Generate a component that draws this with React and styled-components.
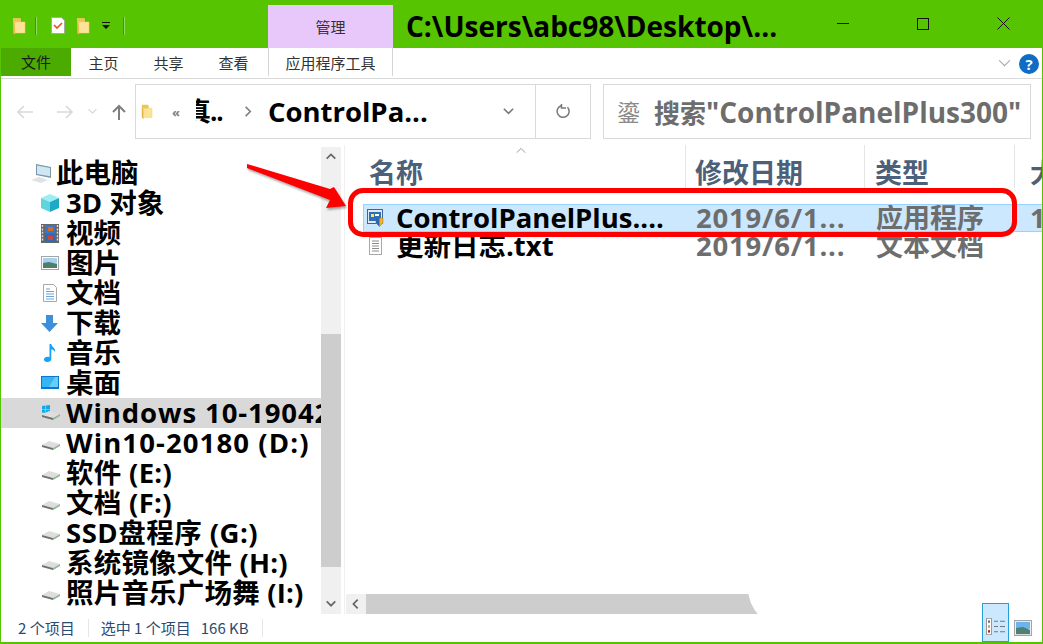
import React from 'react';
import styled, { createGlobalStyle } from 'styled-components';

const Global = createGlobalStyle`
  html, body { margin: 0; padding: 0; background: #fff; overflow: hidden; }
  * { box-sizing: border-box; }
`;
const SANS = `"Open Sans", "Noto Sans", "Noto Sans CJK SC", sans-serif`;
const UI = `"Noto Sans CJK SC", "Noto Sans", sans-serif`;

const Win = styled.div`
  position: relative; width: 1043px; height: 644px; background: #fff; overflow: hidden;
  display: flex; flex-direction: column; font-family: ${SANS};
  border-left: 1px solid #56c400; border-right: 1px solid #56c400; border-bottom: 2px solid #56c400;
`;
const TitleBar = styled.div`
  height: 48px; background: #56c400; display: flex; align-items: flex-start; flex: none; margin: 0 -1px;
`;
const Quick = styled.div`
  width: 268px; height: 48px; flex: none; display: flex; align-items: center; padding: 3px 0 0 12px;
`;
const QDivider = styled.span`
  width: 2px; height: 18px; background: #8fdc5f; border: 0 solid #3d9a00; border-width: 0 0 0 1px; flex: none;
  margin-left: ${p => p.$ml}px;
`;
const QIcon = styled.span`display: flex; margin-left: ${p => p.$ml || 0}px;`;
const ContextTab = styled.div`
  width: 125px; height: 43px; margin-top: 5px; background: #e8c8fa; color: #333;
  font: 400 15px ${UI}; display: flex; align-items: center; justify-content: center; flex: none;
`;
const Title = styled.div`
  margin-left: 13px; width: 380px; font: 700 28px/52px ${SANS}; color: #000; white-space: nowrap; flex: none;
`;
const WinCtrls = styled.div`
  display: flex; margin-left: auto; height: 48px; align-items: center;
`;
const WinBtn = styled.span`
  width: 80px; display: flex; justify-content: center; margin-top: -1px;
`;
const Ribbon = styled.div`
  height: 31px; flex: none; display: flex; align-items: flex-start; border-bottom: 1px solid #dadada; position: relative;
`;
const FileTab = styled.div`
  width: 70px; height: 28px; background: #4cab00; color: #1a1a1a; font: 400 15px/28px ${UI}; text-align: center; flex: none;
`;
const RTab = styled.div`
  width: 65px; height: 28px; font: 400 15px/30px ${UI}; color: #333; text-align: center; flex: none;
`;
const ToolTab = styled(RTab)`
  width: 125px; margin-left: 2px; border: 0 solid #d4d4d4; border-width: 0 1px;
`;
const RibbonRight = styled.div`
  margin-left: auto; display: flex; align-items: center; height: 28px; gap: 7px; padding: 3px 3px 0 0;
`;
const Help = styled.span`
  width: 20px; height: 20px; border-radius: 50%; background: #0f6cc4; color: #fff;
  font: 700 15px/20px ${SANS}; text-align: center;
`;
const AddressRow = styled.div`
  height: 66px; flex: none; padding: 5px 12px 6px 0; display: flex; align-items: stretch;
`;
const NavBtns = styled.div`
  width: 134px; flex: none; display: flex; align-items: center; padding-left: 16px;
`;
const NavIcon = styled.span`display: flex; margin-left: ${p => p.$ml || 0}px;`;
const AddrBox = styled.div`
  width: 456px; flex: none; border: 1px solid #d9d9d9; display: flex; align-items: center;
`;
const AddrFolder = styled.span`display: flex; margin: 0 0 0 5px;`;
const Crumbs = styled.span`
  font: 700 13px ${SANS}; color: #808080; margin-left: 19px; letter-spacing: -1px; width: 24px; flex: none;
`;
const ClippedCrumb = styled.span`
  width: 32px; flex: none; overflow: hidden; white-space: nowrap; font: 700 26px/1.3 ${SANS}; color: #000; margin-right: 13px;
`;
const ClippedInner = styled.span`display: inline-block; margin-left: -11px; letter-spacing: -1px;`;
const CrumbText = styled.span`
  font: 700 27.5px/1 ${SANS}; color: #000; white-space: nowrap; width: ${p => p.$w}px; flex: none; margin-left: 14px;
`;
const AddrCaret = styled.span`
  display: flex; margin-left: auto; width: 56px; height: 100%; align-items: center; padding-left: 23px;
`;
const Refresh = styled.span`
  width: 55px; height: 100%; border-left: 1px solid #d9d9d9; display: flex; align-items: center; justify-content: center;
`;
const SearchBox = styled.div`
  margin-left: 12px; width: 428px; flex: none; border: 1px solid #d9d9d9; display: flex; align-items: center;
  padding-left: 13px; color: #6d6d6d; white-space: nowrap; overflow: hidden;
`;
const SearchGlyph = styled.span`font: 400 23px/1 ${UI}; color: #8a8a8a; width: 37px; flex: none;`;
const SearchText = styled.span`font: 700 26px/1 ${UI};`;
const SearchLatin = styled.span`font: 700 28px/1 ${SANS};`;
const Body = styled.div`flex: 1; min-height: 0; display: flex;`;
const NavPane = styled.div`
  width: 320px; flex: none; padding-top: 13px; overflow: hidden;
`;
const NavRow = styled.div`
  height: 30px; display: flex; align-items: center; padding-left: ${p => p.$root ? 29 : 40}px;
  background: ${p => p.$sel ? '#d9d9d9' : 'transparent'};
  font: 700 27.5px/30px ${SANS}; letter-spacing: ${p => p.$ls || 0}px; color: #000; white-space: nowrap; overflow: hidden;
`;
const NavIco = styled.span`width: ${p => p.$root ? 26 : 25}px; height: 30px; flex: none; display: flex; align-items: center;`;
const VScroll = styled.div`
  width: 20px; flex: none; background: #f0f0f0; margin-top: 2px; display: flex; flex-direction: column;
`;
const SBtn = styled.span`height: 20px; flex: none; display: flex; align-items: center; justify-content: center;`;
const VTrack = styled.div`flex: 1; padding: 167px 0 27px; display: flex;`;
const VThumb = styled.div`flex: 1; background: #cdcdcd;`;
const Files = styled.div`flex: 1; min-width: 0; margin-left: 3px; border-left: 1px solid #f0f0f0; display: flex; flex-direction: column; position: relative;`;
const Header = styled.div`
  height: 59px; flex: none; display: grid; grid-template-columns: 341px 179px 150px 40px; position: relative; overflow: hidden;
`;
const HCell = styled.div`
  border-right: 1px solid #e5e5e5; padding: 9px 0 0 ${p => p.$pl}px; height: 43px; white-space: nowrap;
  font: 700 27px/35px ${UI}; color: #4c607a;
`;
const Caret = styled.span`position: absolute; left: 170px; top: 0; display: flex;`;
const Row = styled.div`
  height: 28px; flex: none; margin-left: 18px; display: grid; grid-template-columns: 332px 180px 154px 40px;
  align-items: center; white-space: nowrap; overflow: hidden;
  background: ${p => p.$sel ? '#cce8ff' : 'transparent'};
  border: 1px solid ${p => p.$sel ? '#99d1ff' : 'transparent'}; border-right: 0;
`;
const NameCell = styled.div`
  display: flex; align-items: center; font: 700 27.5px/26px ${SANS}; color: #000; padding-left: 3px; height: 26px;
`;
const RowIco = styled.span`width: 29px; flex: none; display: flex;`;
const Cell = styled.div`font: 700 ${p => p.$date ? 27.5 : 27}px/26px ${SANS}; letter-spacing: ${p => p.$date ? 0.8 : 0}px; color: #6d6d6d; height: 26px;`;
const Spacer = styled.div`flex: 1;`;
const HScroll = styled.div`
  height: 20px; flex: none; margin-left: 1px; background: #f0f0f0; display: flex;
`;
const HBtn = styled.span`width: 20px; flex: none; display: flex; align-items: center; justify-content: center;`;
const HTrack = styled.div`flex: 1; display: flex; position: relative;`;
const HThumb = styled.div`width: 418px; background: #cdcdcd;`;
const Blob = styled.div`
  position: absolute; left: 382px; top: -14px; width: 300px; height: 48px; background: #fff; border-radius: 0 0 24px 40px;
`;
const Status = styled.div`
  height: 28px; flex: none; display: flex; align-items: center; font: 400 15px/28px ${UI}; color: #2b4a6f; padding-left: 17px; position: relative; white-space: nowrap;
`;
const StatSep = styled.span`width: 1px; height: 18px; background: #e6e6e6; margin: 0 ${p => p.$r}px 0 ${p => p.$l}px;`;
const StatGap = styled.span`margin-left: 10px;`;
const ViewBtns = styled.div`margin-left: auto; display: flex; align-items: flex-start; height: 28px; padding-right: 10px;`;
const ViewDetails = styled.span`
  width: 27px; height: 39px; margin-top: -11px; background: #cce8ff; border: 1px solid #26a0da; display: flex; align-items: flex-end; justify-content: center; padding-bottom: 6px;
`;
const ViewThumb = styled.span`margin-left: 5px; margin-top: 6px; display: flex;`;
const RedFrame = styled.div`
  position: absolute; left: 347px; top: 188px; width: 669px; height: 49px; border: 5px solid #f00; border-radius: 15px; pointer-events: none;
`;
const ArrowWrap = styled.svg`position: absolute; left: 240px; top: 160px; filter: drop-shadow(1px 2px 1px rgba(0,0,0,.35));`;

const Folder = ({ s = 1 }) => (
  <svg width={14 * s} height={18 * s} viewBox="0 0 14 18">
    <path d="M1 1h7l1 1v11H3l-2 1z" fill="#e9c65c" />
    <path d="M3 5h10v11H3z" fill="#fde397" />
    <path d="M1 3v13l2 2v-4z" fill="#e1b54a" />
    <path d="M3 5h10v11H3z" fill="none" stroke="#f0cf72" strokeWidth=".5" />
  </svg>
);
const Doc = () => (
  <svg width="14" height="17" viewBox="0 0 14 17">
    <path d="M.5.5h10l3 3v13H.5z" fill="#fff" stroke="#a8a8a8" />
    <path d="M3 8l3 3 5-5" fill="none" stroke="#e8531f" strokeWidth="1.7" />
  </svg>
);
const Chevron = ({ dir = 'down', c = '#777', w = 14, sw = 1.6 }) => {
  const d = { down: 'M2 4l5 5 5-5', up: 'M2 9l5-5 5 5', left: 'M9 2L4 7l5 5', right: 'M5 2l5 5-5 5' }[dir];
  return <svg width={w} height={w} viewBox="0 0 14 14"><path d={d} fill="none" stroke={c} strokeWidth={sw} /></svg>;
};
const ArrowL = ({ c, flip }) => (
  <svg width="17" height="14" viewBox="0 0 17 14" style={flip ? { transform: 'scaleX(-1)' } : undefined}>
    <path d="M1 7h15M7 1L1 7l6 6" fill="none" stroke={c} strokeWidth="1.6" />
  </svg>
);
const ArrowU = () => (
  <svg width="14" height="16" viewBox="0 0 14 16"><path d="M7 16V2M1 8l6-6 6 6" fill="none" stroke="#7f7f7f" strokeWidth="2" /></svg>
);
const Pc = () => (
  <svg width="22" height="20" viewBox="0 0 22 20">
    <path d="M6 1l15 3v11L6 12z" fill="#7d97a8" /><path d="M7 2.5l13 2.6v8.2L7 11z" fill="#cfe7f3" />
    <path d="M1 17l8-3 9 3-7 3z" fill="#dfe3e6" />
  </svg>
);
const Cube = () => (
  <svg width="18" height="18" viewBox="0 0 18 18">
    <path d="M9 0l9 4-9 4-9-4z" fill="#9beff2" /><path d="M0 4l9 4v10l-9-4z" fill="#5fd4dc" /><path d="M18 4L9 8v10l9-4z" fill="#20a9c6" />
  </svg>
);
const Film = () => (
  <svg width="18" height="19" viewBox="0 0 18 19">
    <rect width="18" height="19" fill="#666" /><rect x="4" y="1" width="10" height="8" fill="#3a77c4" /><rect x="4" y="10" width="10" height="8" fill="#2f6ab8" />
    <rect x="7" y="3" width="5" height="4" fill="#d46a2c" /><rect x="7" y="12" width="5" height="4" fill="#c9473a" />
    <path d="M1.5 1v17M16.5 1v17" stroke="#ddd" strokeWidth="1.4" strokeDasharray="2 1.4" />
  </svg>
);
const Pic = () => (
  <svg width="18" height="14" viewBox="0 0 18 14">
    <rect x=".5" y=".5" width="17" height="13" fill="#fff" stroke="#a5a5a5" />
    <rect x="2" y="2" width="14" height="6" fill="#a6d2ef" /><path d="M2 7l6-1 8 2v4H2z" fill="#4f7d6e" />
  </svg>
);
const DocSm = () => (
  <svg width="14" height="18" viewBox="0 0 14 18" style={{ marginLeft: 2 }}>
    <path d="M.5.5h10l3 3v14H.5z" fill="#fff" stroke="#a8a8a8" />
    <path d="M3 5h4M3 7.5h8M3 10h8M3 12.5h8M3 15h8" stroke="#6aa7d8" strokeWidth="1" />
  </svg>
);
const Down = () => (
  <svg width="17" height="17" viewBox="0 0 17 17"><path d="M5 0h7v8h5l-8.500 9L0 8h5z" fill="#3d8fdc" /></svg>
);
const Note = () => (
  <svg width="12" height="18" viewBox="0 0 12 18" style={{ marginLeft: 3 }}>
    <path d="M5.500 0h1.800c.3 3 4.700 4 3.700 8-1-2-3-2.500-3.700-2.500V15c0 1.800-1.700 3-4 3C1 18 0 16.800 0 15.500 0 13.800 1.700 12.800 3.500 12.800c.7 0 1.400.1 2 .4z" fill="#1aa1f2" />
  </svg>
);
const Desk = () => (
  <svg width="18" height="14" viewBox="0 0 18 14">
    <rect width="18" height="13" fill="#0a78d0" /><rect x="1" y="1" width="16" height="10" fill="#35b5f5" /><path d="M8 11l6-10h3v10z" fill="#6accf7" />
  </svg>
);
const Drive = ({ win }) => (
  <svg width="20" height="16" viewBox="0 0 20 16">
    {win && <path d="M1 1l3.500-.5V4H1zM5 .4L9 0v4H5zM1 4.500h3.500v3.500L1 7.500zM5 4.500h4V8l-4-.5z" fill="#12a8ea" />}
    <path d="M1 10l7-4 11 3-7 4z" fill="#dedede" /><path d="M1 10l11 3v2L1 12z" fill="#707070" /><path d="M12 13l7-4v2l-7 4z" fill="#a8a8a8" />
    <path d="M13 13.500l2-1" stroke="#6fcf6f" />
  </svg>
);
const ExeIcon = () => (
  <svg width="18" height="18" viewBox="0 0 18 18">
    <rect x=".5" y=".5" width="15" height="14" fill="#dfeaf6" stroke="#39689f" />
    <rect x="2" y="3" width="12" height="9" fill="#2f6fb8" /><rect x="4" y="5" width="3" height="3" fill="#f7e27a" /><rect x="8" y="5" width="4" height="2" fill="#fff" />
    <path d="M9 9h7v5l-3.500 3.500L9 14z" fill="#f0b52d" stroke="#9a7416" strokeWidth=".5" /><path d="M12.500 9v8.500L9 14V9z" fill="#2c67b5" />
  </svg>
);
const Txt = () => (
  <svg width="13" height="18" viewBox="0 0 13 18" style={{ marginLeft: 2 }}>
    <rect x=".5" y=".5" width="12" height="17" fill="#fff" stroke="#a8a8a8" />
    <path d="M3 4h7M3 6.500h7M3 9h7M3 11.500h7M3 14h7" stroke="#8c8c8c" />
  </svg>
);
const DetailsIco = () => (
  <svg width="20" height="17" viewBox="0 0 20 21" preserveAspectRatio="none">
    <rect x=".5" y=".5" width="5" height="20" fill="#fff" stroke="#999" /><rect x="2" y="3" width="2" height="3" fill="#777" /><rect x="2" y="9" width="2" height="3" fill="#b9a34f" /><rect x="2" y="15" width="2" height="3" fill="#b22" />
    <path d="M8 4h4M14 4h5M8 10.500h4M14 10.500h5M8 17h4M14 17h5" stroke="#777" strokeWidth="1.2" />
  </svg>
);
const LargeIco = () => (
  <svg width="18" height="16" viewBox="0 0 18 18" preserveAspectRatio="none">
    <rect x=".5" y=".5" width="17" height="17" fill="#fff" stroke="#a3a3a3" strokeWidth="1.3" />
    <rect x="2" y="2" width="14" height="8" fill="#6bb4ee" /><path d="M2 9l7-1 7 3v5H2z" fill="#4e8076" />
  </svg>
);

const places = [
  [Cube, '3D 对象'], [Film, '视频'], [Pic, '图片'], [DocSm, '文档'], [Down, '下载'], [Note, '音乐'], [Desk, '桌面'],
];
const drives = [
  ['Win10-20180 (D:)', 1.1], ['软件 (E:)', 0.3], ['文档 (F:)', 0.3], ['SSD盘程序 (G:)', 0.5], ['系统镜像文件 (H:)', 0.2], ['照片音乐广场舞 (I:)', 0.2],
];

export default function App() {
  return (
    <>
      <Global />
      <Win>
        <TitleBar>
          <Quick>
            <QIcon><Folder /></QIcon>
            <QDivider $ml={9} />
            <QIcon $ml={14}><Doc /></QIcon>
            <QIcon $ml={11}><Folder /></QIcon>
            <QIcon $ml={12}>
              <svg width="8" height="8" viewBox="0 0 8 8"><path d="M0 0h8v1H0zM0 3h8L4 7z" fill="#111" /></svg>
            </QIcon>
            <QDivider $ml={13} />
          </Quick>
          <ContextTab>管理</ContextTab>
          <Title>C:\Users\abc98\Desktop\...</Title>
          <WinCtrls>
            <WinBtn>
              <svg width="12" height="2"><rect width="12" height="1" fill="#111" /></svg>
            </WinBtn>
            <WinBtn>
              <svg width="12" height="12"><rect x=".5" y=".5" width="11" height="11" fill="none" stroke="#111" /></svg>
            </WinBtn>
            <WinBtn>
              <svg width="13" height="13" viewBox="0 0 13 13"><path d="M.5.500l12 12M12.500.500l-12 12" stroke="#111" /></svg>
            </WinBtn>
          </WinCtrls>
        </TitleBar>
        <Ribbon>
          <FileTab>文件</FileTab>
          <RTab>主页</RTab>
          <RTab>共享</RTab>
          <RTab>查看</RTab>
          <ToolTab>应用程序工具</ToolTab>
          <RibbonRight>
            <Chevron c="#a8a8a8" w={15} sw={1} />
            <Help>?</Help>
          </RibbonRight>
        </Ribbon>
        <AddressRow>
          <NavBtns>
            <NavIcon><ArrowL c="#d9d9d9" /></NavIcon>
            <NavIcon $ml={22}><ArrowL c="#d9d9d9" flip /></NavIcon>
            <NavIcon $ml={14}><Chevron c="#d9d9d9" w={11} /></NavIcon>
            <NavIcon $ml={14}><ArrowU /></NavIcon>
          </NavBtns>
          <AddrBox>
            <AddrFolder><Folder s={0.85} /></AddrFolder>
            <Crumbs>«</Crumbs>
            <ClippedCrumb><ClippedInner>真..</ClippedInner></ClippedCrumb>
            <Chevron dir="right" c="#808080" w={13} sw={1.8} />
            <CrumbText $w={170}>ControlPa...</CrumbText>
            <AddrCaret><Chevron c="#777" w={13} sw={1.7} /></AddrCaret>
            <Refresh>
              <svg width="15" height="15" viewBox="0 0 15 15"><path d="M11.500 3.200A6 6 0 1 1 5 1.700M5.500 0v4H10" fill="none" stroke="#7a7a7a" strokeWidth="1.5" /></svg>
            </Refresh>
          </AddrBox>
          <SearchBox>
            <SearchGlyph>鎏</SearchGlyph>
            <SearchText>搜索</SearchText>
            <SearchLatin>"ControlPanelPlus300"</SearchLatin>
          </SearchBox>
        </AddressRow>
        <Body>
          <NavPane>
            <NavRow $root>
              <NavIco $root><Pc /></NavIco>此电脑
            </NavRow>
            {places.map(([I, t]) => (
              <NavRow key={t}><NavIco><I /></NavIco>{t}</NavRow>
            ))}
            <NavRow $sel $ls={0.9}><NavIco><Drive win /></NavIco>Windows 10-19042</NavRow>
            {drives.map(([t, ls]) => (
              <NavRow key={t} $ls={ls}><NavIco><Drive /></NavIco>{t}</NavRow>
            ))}
          </NavPane>
          <VScroll>
            <SBtn><Chevron dir="up" c="#666" w={12} sw={2} /></SBtn>
            <VTrack><VThumb /></VTrack>
            <SBtn><Chevron c="#666" w={12} sw={2} /></SBtn>
          </VScroll>
          <Files>
            <Header>
              <HCell $pl={24}>名称</HCell>
              <HCell $pl={9}>修改日期</HCell>
              <HCell $pl={10}>类型</HCell>
              <HCell $pl={15}>大小</HCell>
              <Caret><Chevron dir="up" c="#888" w={12} sw={1} /></Caret>
            </Header>
            <Row $sel>
              <NameCell><RowIco><ExeIcon /></RowIco>ControlPanelPlus....</NameCell>
              <Cell $date>2019/6/1...</Cell>
              <Cell>应用程序</Cell>
              <Cell>1</Cell>
            </Row>
            <Row>
              <NameCell><RowIco><Txt /></RowIco>更新日志.txt</NameCell>
              <Cell $date>2019/6/1...</Cell>
              <Cell>文本文档</Cell>
            </Row>
            <Spacer />
            <HScroll>
              <HBtn><Chevron dir="left" c="#666" w={12} sw={2} /></HBtn>
              <HTrack>
                <HThumb />
                <Blob />
              </HTrack>
              <HBtn><Chevron dir="right" c="#666" w={12} sw={2} /></HBtn>
            </HScroll>
          </Files>
        </Body>
        <Status>
          2 个项目
          <StatSep $l={13} $r={12} />
          选中 1 个项目
          <StatGap>166 KB</StatGap>
          <StatSep $l={13} $r={0} />
          <ViewBtns>
            <ViewDetails><DetailsIco /></ViewDetails>
            <ViewThumb><LargeIco /></ViewThumb>
          </ViewBtns>
        </Status>
        <RedFrame />
        <ArrowWrap width="110" height="60" viewBox="0 0 110 60">
          <path d="M6 4L89 29l4-2 12 19-20 2 4-8L6 8z" fill="#f00" />
        </ArrowWrap>
      </Win>
    </>
  );
}
